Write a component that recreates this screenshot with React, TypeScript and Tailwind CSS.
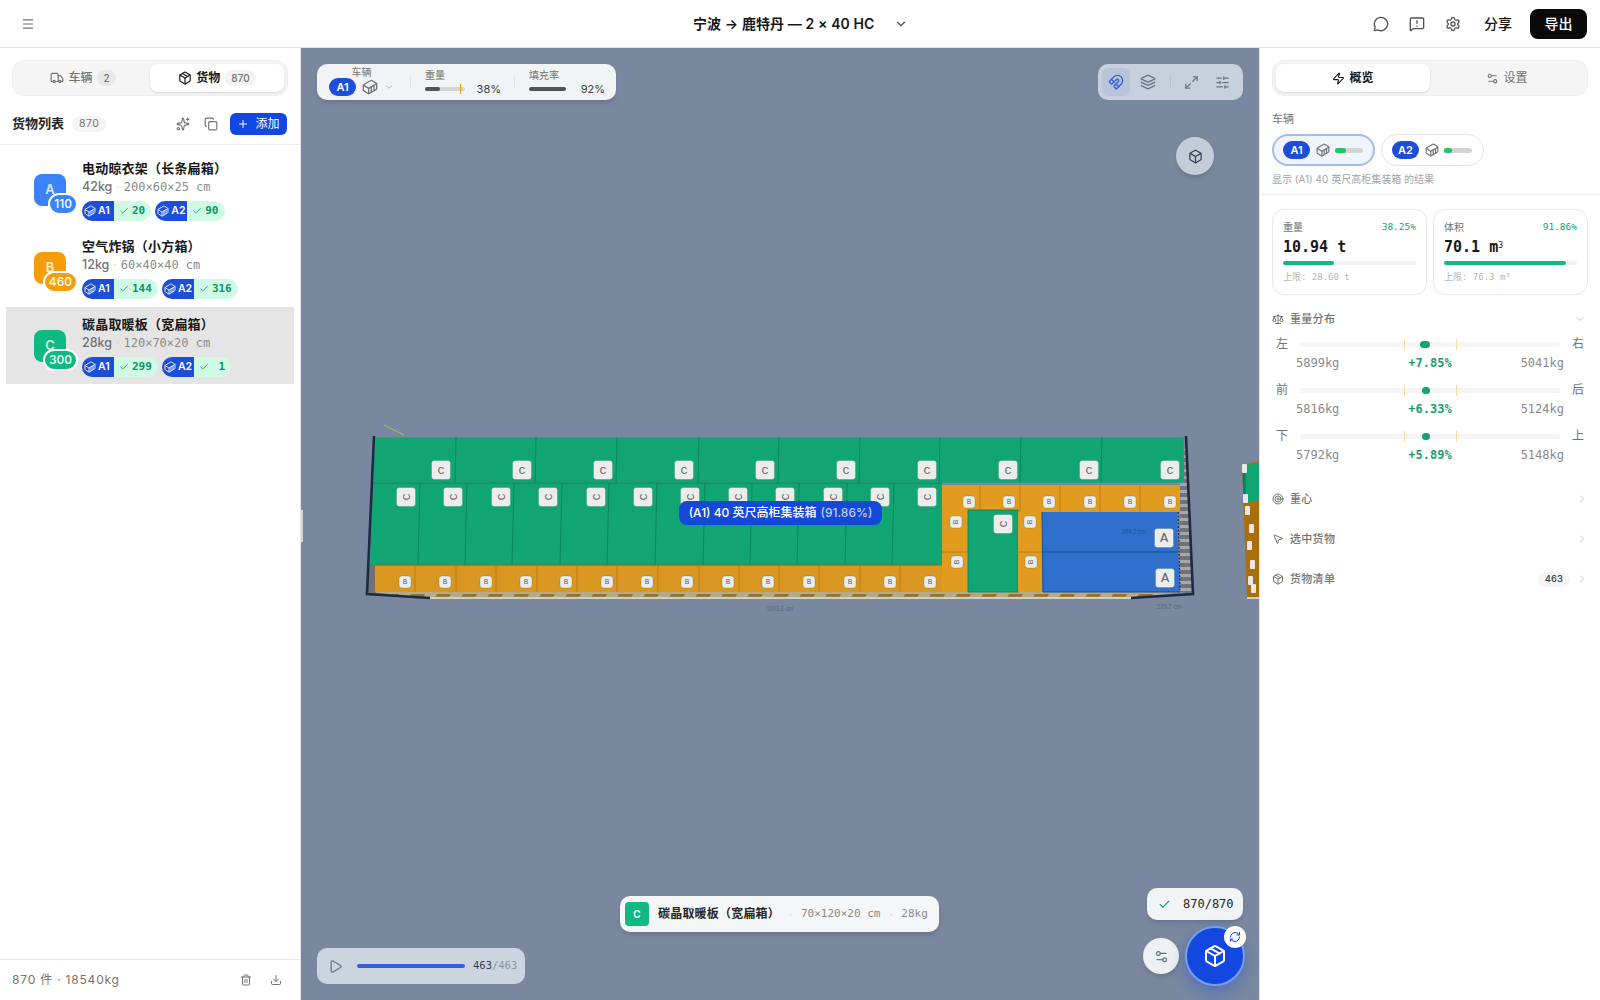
import React from "react"
import {
  Box, Check, ChevronDown, ChevronRight, Container, Copy, Download, Layers, Magnet, Maximize2,
  Menu, MessageCircle, MessageSquareWarning, MousePointer2, Package, Play, Plus, RefreshCw,
  Scale, Settings, Settings2, SlidersHorizontal, Sparkles, Target, Trash2, Truck, Zap,
} from "lucide-react"

const mono = "font-['DejaVu_Sans_Mono','Noto_Sans_CJK_SC',monospace]"

const cargo = [
  { letter: "A", count: 110, name: "电动晾衣架（长条扁箱）", weight: "42kg", size: "200×60×25 cm", bg: "bg-[#3b82f6]", a1: "20", a2: "90" },
  { letter: "B", count: 460, name: "空气炸锅（小方箱）", weight: "12kg", size: "60×40×40 cm", bg: "bg-[#f59e0b]", a1: "144", a2: "316" },
  { letter: "C", count: 300, name: "碳晶取暖板（宽扁箱）", weight: "28kg", size: "120×70×20 cm", bg: "bg-[#10b981]", a1: "299", a2: " 1" },
]

const balance = [
  { a: "左", b: "右", l: "5899kg", r: "5041kg", pct: "+7.85%", dot: "w-[10px] ml-[-7px]" },
  { a: "前", b: "后", l: "5816kg", r: "5124kg", pct: "+6.33%", dot: "w-[8px] ml-[-5px]" },
  { a: "下", b: "上", l: "5792kg", r: "5148kg", pct: "+5.89%", dot: "w-[8px] ml-[-5px]" },
]

function Chip({ name, n }: { name: string; n: string }) {
  return (
    <div className="flex h-5 rounded-full overflow-hidden">
      <div className="w-8 bg-[#1d4ed8] text-white flex items-center pl-[2px] gap-[2px]">
        <Container size={12} className="text-[#dbeafe]" />
        <span className="text-[10.5px] font-semibold">{name}</span>
      </div>
      <div className="bg-[#d1fae5] text-[#059669] flex items-center pl-[5px] pr-[6px] gap-[3px]">
        <Check size={10} />
        <span className={`${mono} text-[11px] font-semibold whitespace-pre leading-none`}>{n}</span>
      </div>
    </div>
  )
}

function CargoRow({ item, selected }: { item: (typeof cargo)[number]; selected: boolean }) {
  return (
    <div className={`mx-[6px] h-[77px] flex items-center pl-[28px] ${selected ? "bg-[#e5e5e5]" : ""}`}>
      <div className={`relative w-8 h-8 rounded-lg ${item.bg} text-white/80 text-[13px] font-semibold flex items-center justify-center shrink-0`}>
        {item.letter}
        <div className={`absolute right-[-12px] top-[19px] min-w-[27px] h-[22px] px-[4px] rounded-full border-2 border-white ${item.bg} text-white text-[12px] font-medium flex items-center justify-center`}>
          {item.count}
        </div>
      </div>
      <div className="ml-[16px] flex flex-col">
        <div className="text-[13px] font-semibold text-[#171717] leading-[18px] tracking-[0.2px]">{item.name}</div>
        <div className="flex items-center text-[12px] leading-[20px] text-[#737373]">
          <span className="font-medium text-[12.5px]">{item.weight}</span>
          <span className="mx-[4px] text-[#d4d4d4]">·</span>
          <span className={`${mono} text-[#8a8a8a]`}>{item.size}</span>
        </div>
        <div className="flex gap-1 mt-[4px]">
          <Chip name="A1" n={item.a1} />
          <Chip name="A2" n={item.a2} />
        </div>
      </div>
    </div>
  )
}

function LeftPanel() {
  return (
    <aside className="w-[301px] shrink-0 border-r border-[#e5e5e5] bg-white flex flex-col">
      <div className="mx-3 mt-3 h-9 rounded-xl border border-[#eeeeee] bg-[#f5f5f5] flex items-center p-[3px] gap-1">
        <div className="flex-1 h-full flex items-center justify-center gap-1 pl-[4px] text-[12px] text-[#737373] font-medium">
          <Truck size={14} />
          <span>车辆</span>
          <span className="ml-[1px] px-[6px] h-4 rounded-full bg-[#e8e8e8] text-[10px] flex items-center">2</span>
        </div>
        <div className="w-[134px] h-full rounded-lg bg-white shadow-sm flex items-center justify-center gap-1 text-[12px] text-[#171717] font-semibold">
          <Package size={14} />
          <span>货物</span>
          <span className="ml-[1px] px-[6px] h-4 rounded-full bg-[#f3f3f3] text-[10px] font-medium text-[#737373] flex items-center">870</span>
        </div>
      </div>
      <div className="h-[49px] pt-[8px] px-3 flex items-center border-b border-[#eeeeee]">
        <span className="text-[13px] font-semibold text-[#262626]">货物列表</span>
        <span className="ml-2 px-[7px] h-4 rounded-full bg-[#f5f5f5] text-[10.5px] tracking-[0.5px] text-[#737373] flex items-center">870</span>
        <Sparkles size={14} className="ml-auto text-[#737373]" />
        <Copy size={14} className="ml-[14px] text-[#737373]" />
        <button className="ml-[12px] mr-px w-[57px] h-[22px] rounded-md bg-[#1347e5] text-white text-[12px] flex items-center justify-center gap-[6px]">
          <Plus size={12} />
          添加
        </button>
      </div>
      <div className="flex-1 pt-[6px] flex flex-col gap-px">
        {cargo.map((c) => (
          <CargoRow key={c.letter} item={c} selected={c.letter === "C"} />
        ))}
      </div>
      <div className="h-[41px] border-t border-[#e9e9e9] px-3 flex items-center text-[12px] text-[#737373]">
        <span className="tracking-[0.8px]">870 件 · 18540kg</span>
        <Trash2 size={12} className="ml-auto" />
        <Download size={12} className="ml-[18px] mr-[6px]" />
      </div>
    </aside>
  )
}

const cTop = [441, 522, 603, 684, 765, 846, 927, 1008, 1089, 1170]
const cTopLines = [456, 536, 617, 699, 779, 860, 940, 1021, 1102]
const uMid = [406, 453, 501, 548, 596, 643, 690, 738, 785, 833, 880, 927]
const uLines = [420, 467, 514, 562, 609, 657, 705, 752, 799, 847, 894]
const bBottom = [405, 445, 486, 526, 566, 607, 647, 687, 728, 768, 809, 850, 890, 930]
const bLines = [415, 456, 496, 537, 577, 617, 658, 699, 739, 779, 819, 860, 900]
const bUpper = [969, 1009, 1049, 1090, 1130, 1170]

function Tag({ x, y, s, t, rot }: { x: number; y: number; s: number; t: string; rot?: boolean }) {
  return (
    <g>
      <rect x={x - s / 2} y={y - s / 2} width={s} height={s} rx={3} fill="#ececec" stroke="#0b5c42" strokeOpacity={0.35} strokeWidth={0.6} />
      <text
        x={x}
        y={y + s * 0.2}
        textAnchor="middle"
        fontSize={t === "A" ? s * 0.72 : s * 0.62}
        fill="#666666"
        transform={rot ? `rotate(-90 ${x} ${y})` : undefined}
        className="font-['Liberation_Mono',monospace]"
      >
        {t}
      </text>
    </g>
  )
}

function Scene() {
  return (
    <svg className="absolute inset-0 w-full h-full" viewBox="301 48 958 952">
      <defs>
        <pattern id="hatch" width="14" height="7" patternUnits="userSpaceOnUse">
          <rect width="14" height="7" fill="#6f7278" />
          <rect y="0" width="14" height="3" fill="#a5a7aa" />
        </pattern>
        <pattern id="floor" width="26" height="6" patternUnits="userSpaceOnUse" patternTransform="skewX(-30)">
          <rect width="26" height="6" fill="#b8a987" />
          <rect width="14" height="3" fill="#94742c" />
        </pattern>
      </defs>
      <line x1="384" y1="425" x2="404" y2="435" stroke="#a8c060" strokeWidth="1" />
      {/* floor and walls */}
      <polygon points="370,592 1184,592 1131,598 430,598" fill="url(#floor)" />
      <rect x="430" y="597" width="701" height="2" fill="#cfcfcc" />
      <polygon points="1180,484 1186,437 1193,594 1180,592" fill="url(#hatch)" />
      <rect x="368" y="565" width="8" height="28" fill="#6f7278" />
      {/* top row C */}
      <polygon points="375,437 1184,437 1184,483 373,483" fill="#10a572" stroke="#7d8a93" strokeWidth="0.6" />
      {cTopLines.map((x) => <line key={x} x1={x} y1={437} x2={x - 1} y2={483} stroke="#0b7d58" strokeWidth="0.8" />)}
      {/* middle row C */}
      <polygon points="373,483 942,483 942,565 370,565" fill="#10a572" />
      <line x1="373" y1="483" x2="942" y2="483" stroke="#0b7d58" strokeWidth="0.8" />
      {uLines.map((x) => <line key={x} x1={x} y1={483} x2={x - 2} y2={565} stroke="#0b7d58" strokeWidth="0.8" />)}
      {/* bottom row B */}
      <rect x="375" y="565" width="567" height="27" fill="#d99621" />
      <line x1="375" y1="565" x2="942" y2="565" stroke="#7b6a20" strokeWidth="1" />
      {bLines.map((x) => <line key={x} x1={x} y1={565} x2={x} y2={592} stroke="#b27a14" strokeWidth="0.8" />)}
      {/* right block */}
      <rect x="942" y="485" width="238" height="27" fill="#e19c20" />
      {[980, 1020, 1060, 1100, 1140].map((x) => <line key={x} x1={x} y1={485} x2={x} y2={512} stroke="#b27a14" strokeWidth="0.8" />)}
      <rect x="942" y="512" width="26" height="80" fill="#e19c20" />
      <line x1="942" y1="552" x2="968" y2="552" stroke="#b27a14" strokeWidth="0.8" />
      <rect x="968" y="510" width="50" height="82" fill="#10a572" stroke="#0b7d58" strokeWidth="0.8" />
      <rect x="1018" y="512" width="24" height="80" fill="#e19c20" />
      <line x1="1018" y1="552" x2="1042" y2="552" stroke="#b27a14" strokeWidth="0.8" />
      <polygon points="1042,512 1177,512 1178,552 1043,552" fill="#2f70cc" />
      <polygon points="1043,552 1178,552 1180,592 1043,592" fill="#2f70cc" />
      <polyline points="1042,512 1043,592 1180,592" fill="none" stroke="#144f9e" strokeWidth="1" />
      <line x1="1043" y1="552" x2="1178" y2="552" stroke="#144f9e" strokeWidth="1" />
      <line x1="1178" y1="512" x2="1180" y2="590" stroke="#1c2a44" strokeWidth="1.2" strokeDasharray="2 1.5" />
      {/* frame */}
      <polyline points="374,436 367,594 430,598" fill="none" stroke="#1c2a44" strokeWidth="2.6" />
      <polyline points="1186,436 1193,594 1131,598" fill="none" stroke="#1c2a44" strokeWidth="2.6" />
      {/* dimension text */}
      <text x="780" y="611" textAnchor="middle" fontSize="5.5" fill="#5c677a">1203.2 cm</text>
      <text x="1169" y="609" textAnchor="middle" fontSize="5.5" fill="#5c677a">235.2 cm</text>
      <text x="1134" y="534" textAnchor="middle" fontSize="5.5" fill="#25518f">269.2 cm</text>
      {/* labels */}
      {cTop.map((x) => <Tag key={x} x={x} y={470} s={19} t="C" />)}
      {uMid.map((x) => <Tag key={x} x={x} y={497} s={19} t="C" rot />)}
      {bBottom.map((x) => <Tag key={x} x={x} y={582} s={12} t="B" />)}
      {bUpper.map((x) => <Tag key={x} x={x} y={502} s={12} t="B" />)}
      <Tag x={956} y={522} s={12} t="B" rot />
      <Tag x={957} y={562} s={12} t="B" rot />
      <Tag x={1030} y={522} s={12} t="B" rot />
      <Tag x={1031} y={562} s={12} t="B" rot />
      <Tag x={1003} y={524} s={19} t="C" rot />
      <Tag x={1164} y={538} s={19} t="A" />
      <Tag x={1165} y={578} s={19} t="A" />
      {/* second container, clipped by the panel */}
      <polygon points="1242,465 1259,461 1259,598 1247,598" fill="#a86f0c" />
      <polygon points="1245,465 1259,463 1259,500 1246,503" fill="#10a572" />
      <polygon points="1242,465 1245,465 1246,503 1244,503" fill="#0b7d58" />
      <rect x="1247" y="597" width="12" height="2" fill="#cfcfcc" />
      {[[1244, 468], [1245, 498], [1247, 510], [1251, 528], [1249, 545], [1252, 564], [1250, 580], [1253, 588]].map(([x, y]) => (
        <rect key={y} x={x - 2} y={y - 4} width={5} height={9} rx={1} fill="#e8e8e8" />
      ))}
    </svg>
  )
}

function Viewport() {
  return (
    <main className="relative flex-1 bg-[#7a889f] overflow-hidden">
      <Scene />
      <div className="absolute left-[-1px] top-[462px] w-[3px] h-[32px] bg-[#d8d5d0]" />

      <div className="absolute left-4 top-4 w-[299px] h-9 rounded-[10px] bg-[#f1f3f5] shadow-md flex items-center pl-3">
        <div className="w-[68px] flex flex-col items-center">
          <span className="text-[10px] leading-[12px] text-[#737373] -mt-[2px] mr-[3px]">车辆</span>
          <div className="flex items-center w-full">
            <span className="w-[27px] h-[18px] rounded-full bg-[#1d4ed8] text-white text-[11px] font-semibold flex items-center justify-center">A1</span>
            <Container size={16} className="ml-[6px] text-[#737373]" />
            <ChevronDown size={10} className="ml-[6px] text-[#a3a3a3]" />
          </div>
        </div>
        <div className="ml-[13px] w-px h-[14px] bg-[#dfe2e6]" />
        <div className="ml-[14px] w-[76px]">
          <div className="text-[10px] leading-[12px] text-[#737373]">重量</div>
          <div className="flex items-center justify-between mt-[1px]">
            <div className="relative w-10 h-1 rounded-full bg-[#d4d4d4]">
              <div className="w-[15px] h-full rounded-full bg-[#525252]" />
              <div className="absolute left-[35px] top-[-3px] w-px h-[10px] bg-[#f59e0b]" />
            </div>
            <span className="text-[11px] leading-[14px] text-[#404040]">38%</span>
          </div>
        </div>
        <div className="ml-[13px] w-px h-[14px] bg-[#dfe2e6]" />
        <div className="ml-[14px] w-[76px]">
          <div className="text-[10px] leading-[12px] text-[#737373]">填充率</div>
          <div className="flex items-center justify-between mt-[1px]">
            <div className="w-[37px] h-1 rounded-full bg-[#525252]" />
            <span className="text-[11px] leading-[14px] text-[#404040]">92%</span>
          </div>
        </div>
      </div>

      <div className="absolute right-4 top-4 w-[145px] h-9 rounded-[10px] bg-[#c8d0dc] flex items-center px-1 text-[#64748b]">
        <div className="w-7 h-7 rounded-md bg-[#b8c4d8] flex items-center justify-center text-[#2f5fd0]">
          <Magnet size={16} />
        </div>
        <Layers size={16} className="ml-[10px]" />
        <div className="ml-[14px] w-px h-[14px] bg-[#b8c0cc]" />
        <Maximize2 size={15} className="ml-[13px]" />
        <SlidersHorizontal size={15} className="ml-[16px]" />
      </div>

      <div className="absolute left-[875px] top-[89px] w-[38px] h-[38px] rounded-full bg-[#c4ccd8] shadow-md flex items-center justify-center text-[#374151]">
        <Box size={15} />
      </div>

      <div className="absolute left-[378px] top-[453px] w-[203px] h-[24px] rounded-lg bg-[#1348d8] text-white text-[12px] font-medium flex items-center justify-center">
        (A1) 40 英尺高柜集装箱<span className="ml-1 text-[#bfd0f5]">(91.86%)</span>
      </div>

      <div className="absolute left-[319px] top-[848px] w-[319px] h-9 rounded-[10px] bg-[#f5f6f7] shadow-md flex items-center pl-[5px]">
        <div className="w-6 h-6 rounded bg-[#10b981] text-white text-[10px] font-semibold flex items-center justify-center">C</div>
        <span className="ml-[9px] text-[12px] font-semibold text-[#262626] tracking-[0.2px]">碳晶取暖板（宽扁箱）</span>
        <span className="ml-[9px] mr-[9px] text-[#d4d4d4] text-[10px]">·</span>
        <span className={`${mono} text-[11px] text-[#8a8a8a]`}>70×120×20 cm</span>
        <span className="mx-[9px] text-[#d4d4d4] text-[10px]">·</span>
        <span className={`${mono} text-[11px] text-[#8a8a8a]`}>28kg</span>
      </div>

      <div className="absolute left-4 top-[900px] w-[208px] h-9 rounded-[10px] bg-[#ccd4df] flex items-center pl-[11px] text-[#64748b]">
        <Play size={15} />
        <div className="ml-[14px] w-[108px] h-1 rounded-full bg-[#3461cf]" />
        <span className={`${mono} ml-2 text-[10.5px]`}>
          <span className="text-[#374151]">463</span>
          <span className="text-[#8b95a5]">/463</span>
        </span>
      </div>

      <div className="absolute right-4 top-[840px] w-[96px] h-8 rounded-[10px] bg-[#f1f3f5] flex items-center pl-[11px] shadow-md">
        <Check size={13} className="text-[#10a572]" />
        <span className={`${mono} ml-[12px] text-[12px] text-[#262626]`}>870/870</span>
      </div>

      <div className="absolute left-[842px] top-[890px] w-9 h-9 rounded-full bg-[#eef0f2] shadow-md flex items-center justify-center text-[#64748b]">
        <Settings2 size={15} />
      </div>

      <div className="absolute left-[884px] top-[878px] w-[60px] h-[60px] rounded-full bg-[#1348e0] border-2 border-[#7a9fe8] shadow-[0_6px_16px_rgba(19,72,224,0.4)] flex items-center justify-center text-white">
        <Package size={24} />
        <div className="absolute left-[37px] top-[-2px] w-[22px] h-[22px] rounded-full bg-white flex items-center justify-center text-[#1348e0]">
          <RefreshCw size={12} />
        </div>
      </div>
    </main>
  )
}

function Stat({ title, pct, value, sup, limit, bar }: { title: string; pct: string; value: string; sup?: boolean; limit: string; bar: string }) {
  return (
    <div className="flex-1 h-[86px] rounded-xl border border-[#e8e8e8] px-[10px] pt-[10px]">
      <div className="flex justify-between items-center h-[14px]">
        <span className="text-[10px] text-[#737373]">{title}</span>
        <span className={`${mono} text-[9.5px] text-[#10a572]`}>{pct}</span>
      </div>
      <div className={`${mono} mt-[3px] h-5 text-[15px] font-bold text-[#171717] leading-5`}>
        {value}
        {sup && <sup className="text-[8px] font-normal">3</sup>}
      </div>
      <div className="mt-[4px] h-1 rounded-full bg-[#f3f3f3]">
        <div className={`h-full rounded-full bg-[#10b981] ${bar}`} />
      </div>
      <div className={`${mono} mt-[6px] text-[9px] text-[#b5b5b5]`}>{limit}</div>
    </div>
  )
}

function Section({ icon, label, badge }: { icon: React.ReactNode; label: string; badge?: string }) {
  return (
    <div className="h-10 flex items-center pl-[12px] pr-[12px] text-[#737373]">
      {icon}
      <span className="ml-[6px] text-[11px] font-medium tracking-[0.3px]">{label}</span>
      {badge && <span className="ml-auto px-[7px] h-[15px] rounded-full bg-[#f5f5f5] text-[9.5px] font-medium text-[#404040] flex items-center">{badge}</span>}
      <ChevronRight size={12} className={`text-[#c4c4c4] ${badge ? "ml-[6px]" : "ml-auto"}`} />
    </div>
  )
}

function RightPanel() {
  return (
    <aside className="w-[341px] shrink-0 bg-white border-l border-[#e5e5e5] flex flex-col">
      <div className="mx-3 mt-3 h-9 rounded-xl border border-[#eeeeee] bg-[#f5f5f5] flex items-center p-[3px]">
        <div className="w-[154px] h-full rounded-lg bg-white shadow-sm flex items-center justify-center gap-1 text-[12px] font-semibold text-[#171717]">
          <Zap size={13} />
          概览
        </div>
        <div className="flex-1 flex items-center justify-center gap-1 text-[12px] text-[#737373]">
          <Settings2 size={13} />
          设置
        </div>
      </div>
      <div className="h-[99px] border-b border-[#eeeeee] px-3 pt-[16px]">
        <div className="text-[11px] leading-[14px] text-[#737373]">车辆</div>
        <div className="flex gap-[6px] mt-[8px]">
          <div className="w-[103px] h-8 rounded-full border-2 border-[#a5bbec] bg-[#eff4fe] flex items-center pl-[9px]">
            <span className="w-[27px] h-[18px] rounded-full bg-[#1d4ed8] text-white text-[11px] font-semibold flex items-center justify-center">A1</span>
            <Container size={14} className="ml-[6px] text-[#737373]" />
            <div className="ml-[5px] w-7 h-[5px] rounded-full bg-[#d4d4d4]">
              <div className="w-[11px] h-full rounded-full bg-[#22c55e]" />
            </div>
          </div>
          <div className="w-[103px] h-8 rounded-full border border-[#e5e5e5] flex items-center pl-[10px]">
            <span className="w-[27px] h-[18px] rounded-full bg-[#1d4ed8] text-white text-[11px] font-semibold flex items-center justify-center">A2</span>
            <Container size={14} className="ml-[6px] text-[#737373]" />
            <div className="ml-[5px] w-7 h-[5px] rounded-full bg-[#d4d4d4]">
              <div className="w-[8px] h-full rounded-full bg-[#22c55e]" />
            </div>
          </div>
        </div>
        <div className="mt-[7px] text-[10px] leading-[13px] text-[#a3a3a3]">显示 (A1) 40 英尺高柜集装箱 的结果</div>
      </div>
      <div className="flex gap-[6px] px-3 pt-[14px]">
        <Stat title="重量" pct="38.25%" value="10.94 t" limit="上限: 28.60 t" bar="w-[38%]" />
        <Stat title="体积" pct="91.86%" value="70.1 m" sup limit="上限: 76.3 m³" bar="w-[92%]" />
      </div>
      <div className="h-[46px] flex items-center pl-[12px] pr-[14px] text-[#737373] mt-[1px]">
        <Scale size={12} />
        <span className="ml-[6px] text-[11px] font-medium tracking-[0.3px]">重量分布</span>
        <ChevronDown size={12} className="ml-auto text-[#c4c4c4]" />
      </div>
      <div className="-mt-[7px] flex flex-col gap-[9px] px-3">
        {balance.map((b) => (
          <div key={b.a} className="h-[37px]">
            <div className="flex items-center h-[18px]">
              <span className="w-[16px] pl-[4px] text-[12px] text-[#737373] box-content">{b.a}</span>
              <div className="relative ml-[8px] w-[260px] h-[5px] rounded-full bg-[#f5f5f5]">
                <div className="absolute left-[104px] top-[-3px] h-[11px] w-px bg-[#f8d9a0]" />
                <div className="absolute left-[156px] top-[-3px] h-[11px] w-px bg-[#f8d9a0]" />
                <div className={`absolute left-[127px] top-[-1px] h-[7px] rounded-full bg-[#10a572] ${b.dot}`} />
              </div>
              <span className="ml-[12px] text-[12px] text-[#737373]">{b.b}</span>
            </div>
            <div className={`${mono} flex justify-between items-center h-[19px] pl-[24px] pr-[24px] text-[12px] text-[#8a8a8a]`}>
              <span>{b.l}</span>
              <span className="text-[#1a9d72] font-semibold">{b.pct}</span>
              <span>{b.r}</span>
            </div>
          </div>
        ))}
      </div>
      <div className="mt-[15px]">
        <Section icon={<Target size={12} />} label="重心" />
        <Section icon={<MousePointer2 size={12} />} label="选中货物" />
        <Section icon={<Package size={12} />} label="货物清单" badge="463" />
      </div>
    </aside>
  )
}

export default function App() {
  return (
    <div className="w-[1600px] h-[1000px] flex flex-col overflow-hidden bg-white font-['Inter','Noto_Sans_CJK_SC',sans-serif]">
      <header className="relative h-12 shrink-0 border-b border-[#e5e5e5] flex items-center pl-[21px] pr-[13px]">
        <Menu size={14} className="text-[#737373]" />
        <div className="absolute left-[693px] top-0 h-full flex items-center text-[14px] font-semibold text-[#171717] tracking-[0.1px]">
          <span>宁波 → 鹿特丹 — 2 × 40 HC</span>
          <ChevronDown size={14} className="ml-[19px] text-[#525252]" />
        </div>
        <div className="ml-auto flex items-center text-[#525252]">
          <MessageCircle size={16} />
          <MessageSquareWarning size={16} className="ml-[20px]" />
          <Settings size={16} className="ml-[20px]" />
          <span className="ml-[23px] text-[14px] font-medium text-[#171717]">分享</span>
          <button className="ml-[18px] w-[57px] h-[30px] rounded-lg bg-[#0a0a0a] text-white text-[14px] font-medium">导出</button>
        </div>
      </header>
      <div className="flex-1 flex min-h-0">
        <LeftPanel />
        <Viewport />
        <RightPanel />
      </div>
    </div>
  )
}
